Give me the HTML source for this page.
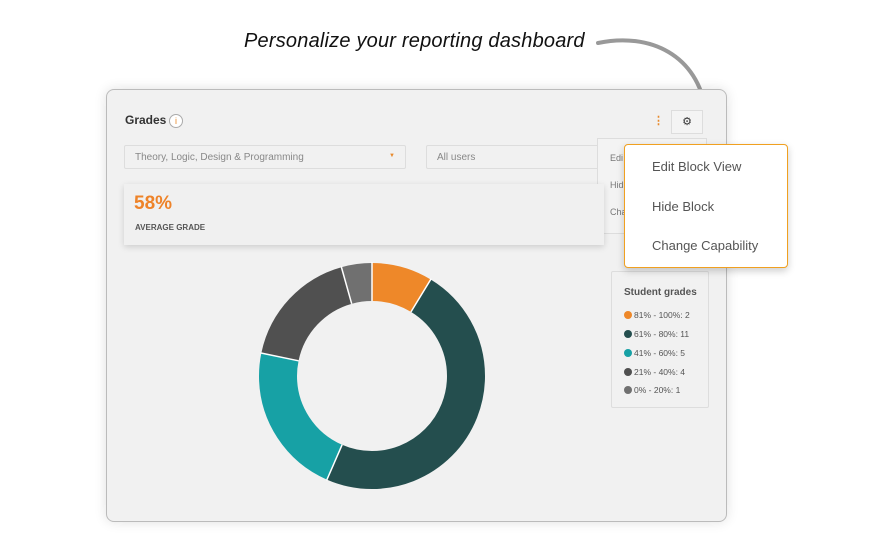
<!DOCTYPE html>
<html><head><meta charset="utf-8"><style>
*{margin:0;padding:0;box-sizing:border-box}
body{width:888px;height:557px;background:#fff;font-family:"Liberation Sans",sans-serif;position:relative;overflow:hidden}
.title{position:absolute;left:244px;top:30px;font-family:"Liberation Sans",sans-serif;font-style:italic;font-size:20px;color:#111;letter-spacing:0.2px;white-space:nowrap}
.card{position:absolute;left:106px;top:89px;width:621px;height:433px;background:#f1f1f1;border:1px solid #bbb;border-radius:8px;box-shadow:0 0 12px rgba(0,0,0,.12)}
.abs{position:absolute}
.sel{position:absolute;height:24px;border:1px solid #ddd;background:#f1f1f1;font-size:10px;color:#888;padding:6px 10px;border-radius:2px}
.menu{position:absolute;left:624px;top:144px;width:164px;height:124px;background:#fff;border:1.5px solid #f0a020;border-radius:4px;box-shadow:0 3px 8px rgba(0,0,0,.2);font-size:13px;color:#555}
.menu div{position:absolute;left:27px}
.leg{position:absolute;left:611px;top:271px;width:98px;height:137px;border:1px solid #ddd;border-radius:2px}
.leg .r{position:absolute;left:12px;font-size:8.5px;color:#555}
.leg .r i{display:inline-block;width:8px;height:8px;border-radius:50%;margin-right:2px;vertical-align:-1px}
</style></head><body>
<div class="title">Personalize your reporting dashboard</div>
<svg class="abs" style="left:590px;top:30px" width="140" height="100"><path d="M8 13 C60 2 108 25 116 82" fill="none" stroke="#999" stroke-width="4" stroke-linecap="round"/><path d="M106 70 L116 86 L124 68" fill="none" stroke="#999" stroke-width="3" stroke-linecap="round"/></svg>
<div class="card"></div>
<div class="abs" style="left:125px;top:113px;font-size:12px;font-weight:bold;color:#333">Grades</div>
<div class="abs" style="left:169px;top:114px;width:14px;height:14px;border:1px solid #aaa;border-radius:50%;background:#fff;color:#e88a2c;font-size:9px;text-align:center;line-height:12px">i</div>
<div class="abs" style="left:653px;top:114px;font-size:11px;color:#e88a2c;font-weight:bold">⋮</div>
<div class="abs" style="left:671px;top:110px;width:32px;height:24px;border:1px solid #ddd;background:#f4f4f4;font-size:11px;text-align:center;line-height:22px;color:#333">⚙</div>
<div class="sel" style="left:124px;top:145px;width:282px">Theory, Logic, Design &amp; Programming<span style="position:absolute;right:10px;top:7px;color:#e88a2c;font-size:6px">▼</span></div>
<div class="sel" style="left:426px;top:145px;width:180px">All users</div>
<div class="abs" style="left:597px;top:138px;width:110px;height:96px;background:#f3f3f3;border:1px solid #ddd;font-size:9px;color:#777"><div class="abs" style="left:12px;top:14px">Edi</div><div class="abs" style="left:12px;top:41px">Hid</div><div class="abs" style="left:12px;top:68px">Cha</div></div>
<div class="abs" style="left:124px;top:184px;width:480px;height:61px;background:#f0f0f0;box-shadow:0 2px 6px rgba(0,0,0,.15)"></div>
<div class="abs" style="left:134px;top:193px;font-size:19px;font-weight:bold;color:#ee8329">58%</div>
<div class="abs" style="left:135px;top:223px;font-size:8px;font-weight:bold;color:#555">AVERAGE GRADE</div>
<svg class="abs" style="left:252px;top:256px" width="240" height="240">
<g transform="rotate(-90 120 120)" fill="none" stroke-width="38">
<circle cx="120" cy="120" r="94" stroke="#ee8829" stroke-dasharray="51.36 600"/>
<circle cx="120" cy="120" r="94" stroke="#244e4e" stroke-dasharray="282.5 600" stroke-dashoffset="-51.36"/>
<circle cx="120" cy="120" r="94" stroke="#17a1a5" stroke-dasharray="128.4 600" stroke-dashoffset="-333.86"/>
<circle cx="120" cy="120" r="94" stroke="#505050" stroke-dasharray="102.7 600" stroke-dashoffset="-462.26"/>
<circle cx="120" cy="120" r="94" stroke="#707070" stroke-dasharray="25.7 600" stroke-dashoffset="-564.96"/>
</g>
<g stroke="#fff" stroke-width="1.5">
<line x1="158.97" y1="55.92" x2="179.23" y2="22.6"/>
<line x1="90.1" y1="188.8" x2="74.55" y2="224.5"/>
<line x1="46.56" y1="104.8" x2="8.37" y2="96.9"/>
<line x1="99.7" y1="47.8" x2="89.15" y2="10.25"/>
<line x1="120" y1="45" x2="120" y2="6"/>
</g></svg>
<div class="leg">
<div class="abs" style="left:12px;top:15px;font-size:10px;font-weight:bold;color:#555">Student grades</div>
<div class="r" style="top:38px"><i style="background:#ee8829"></i>81% - 100%: 2</div>
<div class="r" style="top:57px"><i style="background:#244e4e"></i>61% - 80%: 11</div>
<div class="r" style="top:76px"><i style="background:#17a1a5"></i>41% - 60%: 5</div>
<div class="r" style="top:95px"><i style="background:#505050"></i>21% - 40%: 4</div>
<div class="r" style="top:113px"><i style="background:#707070"></i>0% - 20%: 1</div>
</div>
<div class="menu"><div style="top:14px">Edit Block View</div><div style="top:54px">Hide Block</div><div style="top:93px">Change Capability</div></div>
</body></html>
